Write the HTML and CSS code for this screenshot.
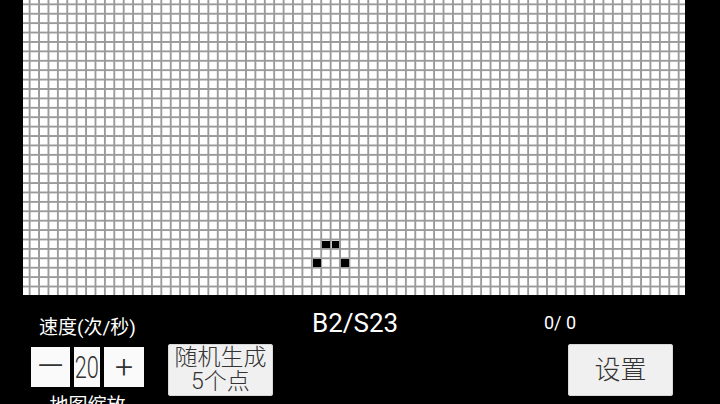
FILE: index.html
```html
<!DOCTYPE html>
<html lang="zh-CN">
<head>
<meta charset="utf-8">
<title>Life</title>
<link rel="stylesheet" href="styles.css">
</head>
<body>
<div class="app">
  <div class="board">
    <span class="cell" style="left:299.3px;top:240.5px"></span>
    <span class="cell" style="left:308.7px;top:240.5px"></span>
    <span class="cell" style="left:289.9px;top:259.3px"></span>
    <span class="cell" style="left:318.2px;top:259.3px"></span>
  </div>
  <div class="controls">
    <div class="speed">
      <div class="label">速度(次/秒)</div>
      <div class="stepper">
        <div class="step minus">—</div>
        <div class="step value"><span class="num">20</span></div>
        <div class="step plus">+</div>
      </div>
      <div class="label zoom">地图缩放</div>
    </div>
    <div class="btn random">随机生成<br>5个点</div>
    <div class="rule">B2/S23</div>
    <div class="right">
      <div class="count">0/ 0</div>
      <div class="btn settings">设置</div>
    </div>
  </div>
</div>
</body>
</html>
```

FILE: styles.css
```css
html, body {
  margin: 0;
  padding: 0;
  background: #000;
  overflow: hidden;
}
body {
  width: 720px;
  height: 404px;
  font-family: Roboto, "Noto Sans CJK SC", sans-serif;
  font-weight: 300;
  color: #fff;
}
.app {
  display: flex;
  flex-direction: column;
}
.board {
  position: relative;
  width: 662px;
  height: 295px;
  margin-left: 23px;
  background-color: #fff;
  background-image:
    linear-gradient(to right, #9a9a9a 1.6px, transparent 1.6px),
    linear-gradient(to bottom, #9a9a9a 1.6px, transparent 1.6px);
  background-size: 9.42px 9.42px;
  background-position: 5.7px 3.4px;
}
.cell {
  position: absolute;
  width: 7.8px;
  height: 7.8px;
  background: #000;
}
.controls {
  display: flex;
  align-items: flex-start;
  height: 109px;
}
.speed {
  margin-left: 31px;
  width: 113px;
  display: flex;
  flex-direction: column;
  align-items: center;
  padding-top: 21px;
}
.label {
  font-size: 19px;
  line-height: 24px;
  height: 24px;
  font-weight: 400;
  white-space: nowrap;
}
.stepper {
  margin-top: 7px;
  display: flex;
  gap: 4px;
  height: 40px;
}
.step {
  background: #fafafa;
  color: #333;
  height: 40px;
  display: flex;
  align-items: center;
  justify-content: center;
}
.minus {
  width: 39px;
  font-size: 35px;
  line-height: 40px;
}
.value {
  width: 26px;
  overflow: hidden;
}
.num {
  font-size: 32px;
  line-height: 40px;
  display: inline-block;
  transform: scaleX(0.68);
}
.plus {
  width: 40px;
  font-size: 32px;
}
.zoom {
  margin-top: 7px;
}
.btn {
  background: #f0f0f0;
  color: #333;
  border-radius: 3px;
  box-shadow: inset 0 0 0 1px #d8d8d8;
  text-align: center;
  box-sizing: border-box;
}
.random {
  margin-left: 24px;
  margin-top: 49px;
  width: 105px;
  height: 52px;
  font-size: 23px;
  line-height: 23.5px;
  padding-top: 2px;
}
.rule {
  margin-left: 39px;
  width: 232px;
  margin-top: 14.6px;
  font-size: 26px;
  line-height: 26px;
  font-weight: 400;
}
.right {
  display: flex;
  flex-direction: column;
  align-items: flex-start;
}
.count {
  margin-top: 18.3px;
  font-size: 18px;
  line-height: 20px;
  height: 20px;
  font-weight: 400;
}
.settings {
  margin-left: 24px;
  margin-top: 10.7px;
  width: 105px;
  height: 52px;
  font-size: 26px;
  line-height: 52px;
}
```
